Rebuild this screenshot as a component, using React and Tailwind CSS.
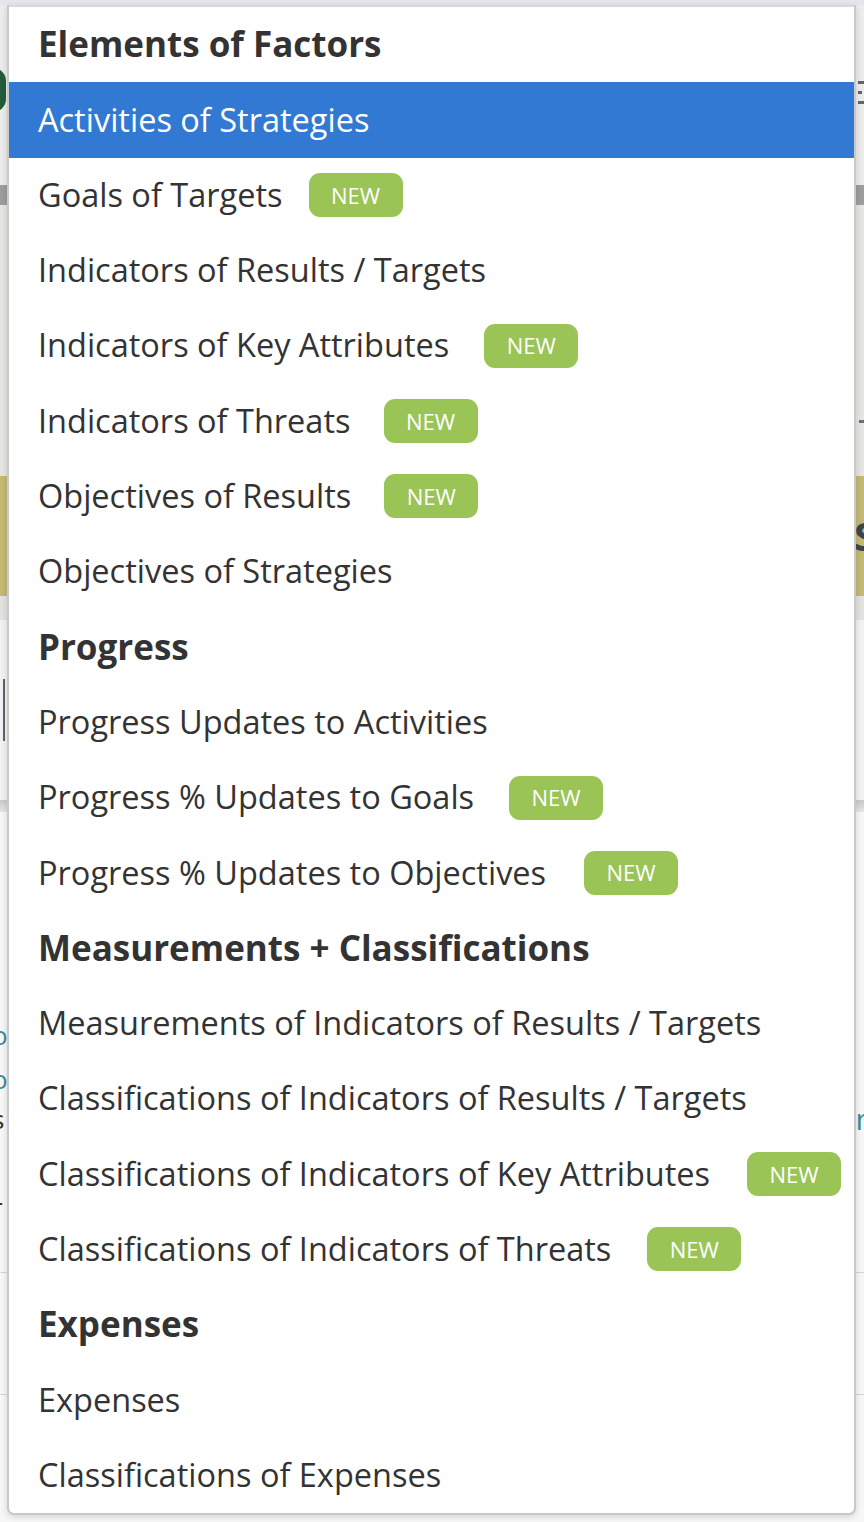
import React from 'react';

const sections = [
  {
    title: 'Elements of Factors',
    items: [
      { label: 'Activities of Strategies', active: true },
      { label: 'Goals of Targets', gap: 26 },
      { label: 'Indicators of Results / Targets' },
      { label: 'Indicators of Key Attributes', gap: 35 },
      { label: 'Indicators of Threats', gap: 33 },
      { label: 'Objectives of Results', gap: 33 },
      { label: 'Objectives of Strategies' },
    ],
  },
  {
    title: 'Progress',
    items: [
      { label: 'Progress Updates to Activities' },
      { label: 'Progress % Updates to Goals', gap: 35 },
      { label: 'Progress % Updates to Objectives', gap: 38 },
    ],
  },
  {
    title: 'Measurements + Classifications',
    items: [
      { label: 'Measurements of Indicators of Results / Targets' },
      { label: 'Classifications of Indicators of Results / Targets' },
      { label: 'Classifications of Indicators of Key Attributes', gap: 37 },
      { label: 'Classifications of Indicators of Threats', gap: 36 },
    ],
  },
  {
    title: 'Expenses',
    items: [{ label: 'Expenses' }, { label: 'Classifications of Expenses' }],
  },
];

// badge offset differs a little per row in the original
const NewBadge = ({ gap }) => (
  <span
    className="inline-flex h-[44px] w-[94px] items-center justify-center rounded-[11px] bg-[#9bc456] text-[22px] font-normal text-white"
    style={{ marginLeft: gap }}
  >
    NEW
  </span>
);

const MenuItem = ({ label, active, gap }) => (
  <div
    className={
      active
        ? 'flex h-[75.3px] cursor-pointer items-center bg-[#3179d3] pl-[29px] text-white'
        : 'flex h-[75.3px] cursor-pointer items-center pl-[29px] text-[#333333] hover:bg-gray-100'
    }
  >
    <span>{label}</span>
    {gap && <NewBadge gap={gap} />}
  </div>
);

const Background = () => (
  <div className="flex min-h-[1522px] flex-col bg-[#f4f4f4]">
    <div className="h-[5px] bg-[#e3e7ec]" />
    <div className="flex h-[180px] items-start justify-between bg-[#ececea]">
      <div className="mt-[63px] -ml-[20px] h-[44px] w-[26px] rounded-full bg-[#245c3a]" />
      <div className="mt-[76px] flex w-[6px] flex-col gap-[7px]">
        <div className="h-[3px] bg-[#5d6670]" />
        <div className="h-[3px] w-[4px] bg-[#5d6670]" />
        <div className="h-[3px] bg-[#5d6670]" />
      </div>
    </div>
    <div className="h-[20px] bg-[#9d9d9d]" />
    <div className="flex h-[271px] items-end justify-end bg-[#e5e5e2] pb-[53px]">
      <div className="h-[3px] w-[5px] bg-[#6a7078]" />
    </div>
    <div className="flex h-[120px] items-center justify-end overflow-hidden bg-[#c3b874]">
      <span className="-mr-[12px] text-[40px] font-bold text-[#3b4550]">S</span>
    </div>
    <div className="h-[24px] bg-[#e2e2df]" />
    <div className="flex h-[180px] items-center bg-[#f2f2f2]">
      <div className="ml-[3px] h-[62px] w-[2px] bg-[#5c6570]" />
    </div>
    <div className="h-[12px] bg-gradient-to-b from-[#c9c9c9] to-[#e6e6e6]" />
    <div className="flex h-[460px] flex-col overflow-hidden bg-[#f7f7f7]">
      <span className="mt-[210px] -ml-[8px] text-[26px] leading-[26px] text-[#3f8d99]">o</span>
      <span className="mt-[18px] -ml-[8px] text-[26px] leading-[26px] text-[#3f8d99]">o</span>
      <div className="mt-[14px] flex justify-between">
        <span className="-ml-[8px] text-[26px] leading-[26px] text-[#333]">s</span>
        <span className="-mr-[10px] text-[30px] leading-[26px] text-[#3f8d99]">n</span>
      </div>
      <span className="mt-[62px] -ml-[8px] text-[26px] leading-[26px] text-[#333]">r</span>
    </div>
    <div className="h-[1px] bg-[#d6d6d6]" />
    <div className="h-[121px] bg-[#f7f7f7]" />
    <div className="h-[1px] bg-[#d6d6d6]" />
    <div className="flex-1 bg-[#f7f7f7]" />
  </div>
);

export default function App() {
  return (
    <div className="relative w-[864px] overflow-hidden" style={{ fontFamily: '"Open Sans", "Noto Sans", sans-serif' }}>
      <Background />
      <div className="absolute left-[7px] top-[5px] w-[849px] rounded-b-[7px] border-2 border-t-0 border-[#c9c9c9] bg-white text-[32.5px] shadow-[0_2px_6px_rgba(0,0,0,0.15)]">
        <div className="h-[2px] bg-[#d9d9d9]" />
        {sections.map((section) => (
          <div key={section.title}>
            <div className="flex h-[75.3px] items-center pl-[29px] text-[35px] font-bold text-[#333333]">
              {section.title}
            </div>
            {section.items.map((item) => (
              <MenuItem key={item.label} {...item} />
            ))}
          </div>
        ))}
      </div>
    </div>
  );
}
